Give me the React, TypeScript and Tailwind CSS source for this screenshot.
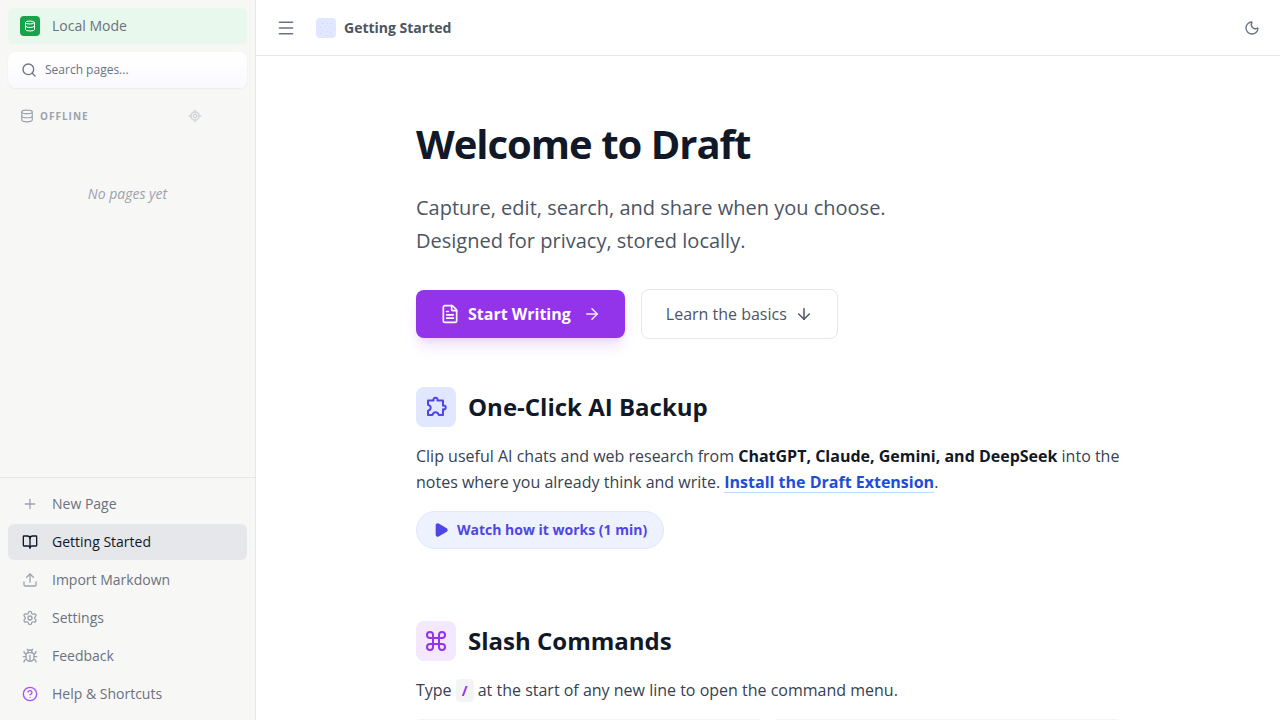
import type { ComponentType, ReactNode } from "react";
import {
  ArrowDown,
  ArrowRight,
  BookOpen,
  Bug,
  CircleHelp,
  Command,
  Database,
  FileText,
  LocateFixed,
  Menu,
  Moon,
  Play,
  Plus,
  Search,
  Settings,
  Upload,
} from "lucide-react";

type IconType = ComponentType<{ className?: string; strokeWidth?: number }>;

type NavItem = { label: string; icon: IconType; iconClass: string; active?: boolean };

const navItems: NavItem[] = [
  { label: "New Page", icon: Plus, iconClass: "text-[#9ca3af]" },
  { label: "Getting Started", icon: BookOpen, iconClass: "text-[#111827]", active: true },
  { label: "Import Markdown", icon: Upload, iconClass: "text-[#9ca3af]" },
  { label: "Settings", icon: Settings, iconClass: "text-[#9ca3af]" },
  { label: "Feedback", icon: Bug, iconClass: "text-[#9ca3af]" },
  { label: "Help & Shortcuts", icon: CircleHelp, iconClass: "text-[#a855f7]" },
];

function PuzzleIcon() {
  return (
    <svg viewBox="0 0 24 24" className="size-6" fill="none" stroke="currentColor" strokeWidth="2" strokeLinejoin="round" aria-hidden="true">
      <path d="M4 5.5H9.6C9.2 3.6 10.1 2.8 11.5 2.8S13.8 3.6 13.4 5.5H19V10.7C20.8 10.3 21.7 11.1 21.7 12.5S20.8 14.7 19 14.3V20H14.8C14.2 18.1 13.2 17.2 11.6 17.2S9 18.1 8.4 20H4V15.8C5.9 15.2 6.7 14.2 6.7 12.8S5.9 10.3 4 9.7Z" />
    </svg>
  );
}

/* A few loose specks over the page's colour tile. */
function SpeckledTile() {
  const specks = [
    [6, 5], [11, 5], [15, 5], [4, 9], [9, 8], [13, 9], [17, 11], [6, 12], [10, 13], [4, 15], [14, 14], [10, 17], [15, 17],
  ];
  return (
    <svg viewBox="0 0 20 20" className="mr-2 ml-5 size-5 rounded bg-[#e0e7ff]" aria-hidden="true">
      {specks.map(([x, y]) => (
        <rect key={`${x}-${y}`} x={x} y={y} width="1" height="1" fill="#c7d7fe" />
      ))}
    </svg>
  );
}

function Sidebar() {
  return (
    <aside className="flex w-64 shrink-0 flex-col border-r border-[#e5e7eb] bg-[#f7f7f5] text-sm text-[#6b7280]">
      <div className="flex flex-col gap-2 p-2">
        <button className="flex h-9 items-center gap-3 rounded-md bg-[#e8f8ed] px-3">
          <span className="flex size-5 items-center justify-center rounded bg-[#16a34a] text-white">
            <Database className="size-3" />
          </span>
          Local Mode
        </button>
        <button className="flex h-9 items-center gap-2 rounded-lg bg-linear-to-b from-white to-[#faf9ff] px-[13px] text-xs shadow-xs">
          <Search className="size-4" />
          Search pages...
        </button>
      </div>
      <div className="flex items-center gap-1.5 px-5 pt-3 text-[#9ca3af]">
        <Database className="size-3.5" />
        <h2 className="text-[10px] leading-4 font-bold tracking-widest">OFFLINE</h2>
        <button aria-label="Locate current page" className="mr-[33px] ml-auto text-[#d1d5db]">
          <LocateFixed className="size-3.5" strokeWidth={2.5} />
        </button>
      </div>
      <p className="grow pt-15 text-center leading-5 text-[#9ca3af] italic">No pages yet</p>
      <nav className="flex flex-col gap-0.5 border-t border-[#e5e7eb] p-2">
        {navItems.map(({ label, icon: Icon, iconClass, active }) => (
          <a
            key={label}
            href="#"
            className={
              active
                ? "flex h-9 items-center gap-3 rounded-md bg-[#e5e7eb] px-3.5 text-[#111827]"
                : "flex h-9 items-center gap-3 rounded-md px-3.5"
            }
          >
            <Icon className={`mr-0.5 size-4 ${iconClass}`} strokeWidth={2} />
            {label}
          </a>
        ))}
      </nav>
    </aside>
  );
}

function SectionHeading({ tile, icon, children }: { tile: string; icon: ReactNode; children: ReactNode }) {
  return (
    <div className="flex items-center gap-3">
      <span className={`flex size-10 items-center justify-center rounded-lg ${tile}`}>{icon}</span>
      <h2 className="text-2xl font-bold text-[#111827]">{children}</h2>
    </div>
  );
}

export default function App() {
  return (
    <div className="flex h-screen overflow-hidden bg-white font-['Open_Sans',sans-serif]">
      <Sidebar />
      <div className="flex min-w-0 grow flex-col">
        <header className="flex h-14 shrink-0 items-center border-b border-[#e5e7eb] px-5 text-[#6b7280]">
          <button aria-label="Toggle sidebar">
            <Menu className="size-5" strokeWidth={1.75} />
          </button>
          <SpeckledTile />
          <span className="text-sm font-bold text-[#4b5563]">Getting Started</span>
          <button aria-label="Switch to dark mode" className="ml-auto">
            <Moon className="size-4" />
          </button>
        </header>
        <main className="grow overflow-hidden">
          <div className="mx-auto max-w-3xl px-8 pt-16 text-[#374151]">
            <h1 className="text-[40px] leading-12 font-bold tracking-tight text-[#111827]">Welcome to Draft</h1>
            <p className="mt-[23px] max-w-lg text-xl leading-[33px] text-[#4b5563]">
              Capture, edit, search, and share when you choose. Designed for privacy, stored locally.
            </p>
            <div className="mt-8 flex items-center gap-4">
              <button className="flex h-12 items-center rounded-lg bg-[#9333ea] px-6 font-bold text-white shadow-lg shadow-[#a855f7]/20">
                <FileText className="mr-2 size-5" />
                Start Writing
                <ArrowRight className="ml-3 size-4.5 opacity-90" />
              </button>
              <a href="#basics" className="flex items-center gap-2 rounded-lg border border-[#e5e7eb] px-6 py-3 text-[#4b5563]">
                Learn the basics
                <ArrowDown className="size-4.5" />
              </a>
            </div>
            <section className="mt-12">
              <SectionHeading tile="bg-[#e0e7ff] text-[#4f46e5]" icon={<PuzzleIcon />}>
                One-Click AI Backup
              </SectionHeading>
              <p className="mt-4 leading-[26px]">
                Clip useful AI chats and web research from{" "}
                <strong className="font-bold text-[#111827]">ChatGPT, Claude, Gemini, and DeepSeek</strong> into the notes
                where you already think and write.{" "}
                <a href="#extension" className="font-bold text-[#1d4ed8] shadow-[inset_0_-1px_0_#bfdbfe]">
                  Install the Draft Extension
                </a>
                .
              </p>
              <button className="mt-4 flex h-[38px] items-center gap-2 rounded-full border border-[#e0e7ff] bg-[#eef2ff] px-4 text-sm font-bold text-[#4f46e5]">
                <Play className="size-4 fill-current" />
                Watch how it works (1 min)
              </button>
            </section>
            <section id="basics" className="mt-18">
              <SectionHeading tile="bg-[#f3e8ff] text-[#9333ea]" icon={<Command className="size-6" />}>
                Slash Commands
              </SectionHeading>
              <p className="mt-4 leading-[26px]">
                Type{" "}
                <code className="rounded bg-[#f3f4f6] px-1.5 py-0.5 font-['Open_Sans',sans-serif] text-sm font-bold text-[#9333ea]">
                  /
                </code>{" "}
                at the start of any new line to open the command menu.
              </p>
              <div className="mt-4 grid grid-cols-2 gap-3">
                <div className="h-16 rounded border border-[#f3f4f6]" />
                <div className="h-16 rounded border border-[#f3f4f6]" />
              </div>
            </section>
          </div>
        </main>
      </div>
    </div>
  );
}
